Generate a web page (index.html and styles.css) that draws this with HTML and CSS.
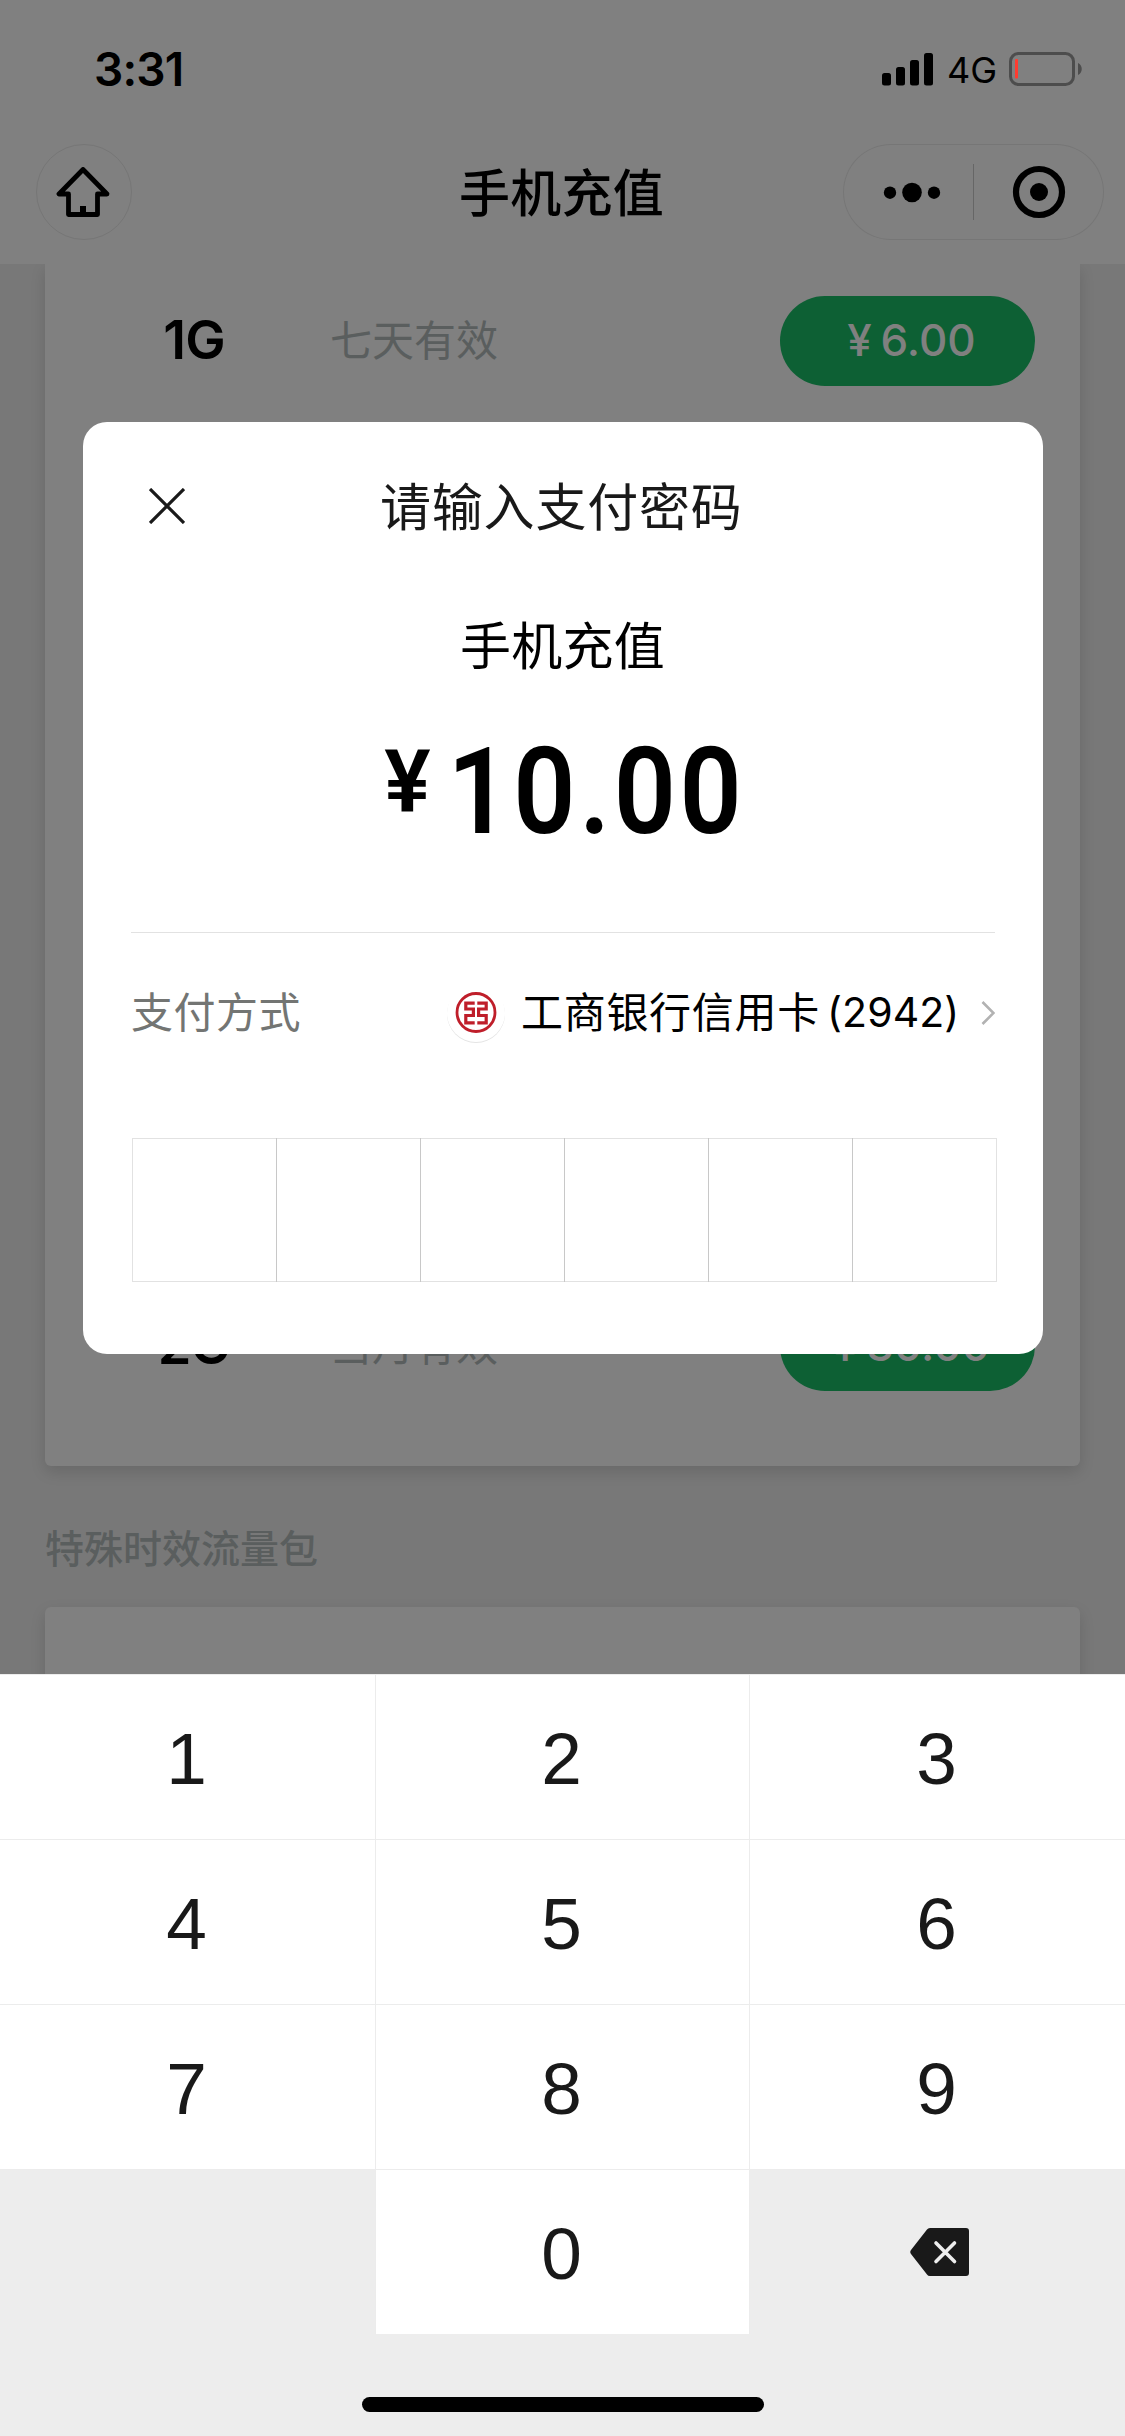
FILE: index.html
```html
<!DOCTYPE html>
<html lang="zh-CN">
<head>
<meta charset="utf-8">
<title>手机充值</title>
<link rel="stylesheet" href="styles.css">
</head>
<body>
<div class="screen">
  <header class="status">
    <span class="clock">3:31</span>
    <div class="status-right">
      <svg class="signal" width="51" height="33" viewBox="0 0 51 33"><rect x="0" y="20" width="9" height="12.5" rx="2.5"/><rect x="14" y="14" width="9" height="18.5" rx="2.5"/><rect x="28" y="7" width="9" height="25.5" rx="2.5"/><rect x="42" y="0" width="9" height="32.5" rx="2.5"/></svg>
      <span class="network">4G</span>
      <svg class="battery" width="74" height="34" viewBox="0 0 74 34"><rect x="1.5" y="1.5" width="63" height="31" rx="8" fill="none" stroke="#4d4d4d" stroke-width="3"/><rect x="6" y="7" width="3" height="19.5" rx="1" fill="#ff3b30"/><path d="M69 11c5 2 5 10 0 12z" fill="#4d4d4d"/></svg>
    </div>
  </header>
  <nav class="nav">
    <div class="home">
      <svg width="54" height="50" viewBox="0 0 54 50"><path d="M27 2.500 3 27h9.500v20.500h29V27H51z" fill="none" stroke="#000" stroke-width="4.800" stroke-linejoin="round"/><rect x="24" y="39" width="6" height="7"/></svg>
    </div>
    <h1 class="nav-title">手机充值</h1>
    <div class="capsule">
      <svg width="261" height="96" viewBox="0 0 261 96"><circle cx="47" cy="48.700" r="6.200"/><circle cx="69" cy="48.500" r="9.800"/><circle cx="91" cy="48.700" r="6.200"/><rect x="130" y="20" width="1" height="56" fill="#666"/><circle cx="196" cy="48" r="23" fill="none" stroke="#000" stroke-width="6.200"/><circle cx="196" cy="48" r="9"/></svg>
    </div>
  </nav>
  <main class="page">
    <section class="card card-main">
      <div class="plan"><span class="size">1G</span><span class="term">七天有效</span><span class="price">¥ 6.00</span></div>
      <div class="plan"><span class="size">2G</span><span class="term">当月有效</span><span class="price">¥ 30.00</span></div>
    </section>
    <h2 class="section-title">特殊时效流量包</h2>
    <section class="card card-next"></section>
  </main>

  <div class="dialog">
    <div class="dialog-head">
      <svg class="close" width="36" height="36" viewBox="0 0 36 36"><path d="M1 1l34 34M35 1L1 35" stroke="#191919" stroke-width="3.200"/></svg>
      <span class="dialog-title">请输入支付密码</span>
    </div>
    <div class="product">手机充值</div>
    <div class="amount"><span class="yen">¥</span><span class="num">10.00</span></div>
    <div class="method">
      <span class="method-label">支付方式</span>
      <span class="bank-logo">
        <svg width="42" height="42" viewBox="0 0 42 42" fill="none" stroke="#bf1e2a"><circle cx="21" cy="20.500" r="19" stroke-width="2.800"/><path d="M19.700 11.200H10.800v5.800h7.600v6.500H10.800v7.300h8.900M22.300 11.200h8.900v5.800h-7.600v6.500h7.600v7.300h-8.900" stroke-width="3.200"/></svg>
      </span>
      <span class="bank">工商银行信用卡</span><span class="card-no">(2942)</span>
      <svg class="chevron" width="14" height="26" viewBox="0 0 14 26"><path d="M1.500 2l11 11-11 11" fill="none" stroke="#b2b2b2" stroke-width="2.600"/></svg>
    </div>
    <div class="pin"><i></i><i></i><i></i><i></i><i></i><i></i></div>
  </div>

  <div class="keypad">
    <div class="keys">
      <b>1</b><b>2</b><b>3</b>
      <b>4</b><b>5</b><b>6</b>
      <b>7</b><b>8</b><b>9</b>
      <b class="blank"></b><b>0</b>
      <b class="blank erase"><svg width="60" height="48" viewBox="0 0 60 48"><path d="M17 1.500Q18 0 20 0H56q3 0 3 3v42q0 3-3 3H20q-2 0-3-1.500L1 26Q-.5 24 1 22z" fill="#191919"/><path d="M26 15l18.500 18.500M44.500 15L26 33.500" stroke="#ededed" stroke-width="3.600" stroke-linecap="round"/></svg></b>
    </div>
    <div class="indicator"></div>
  </div>
</div>
</body>
</html>
```
FILE: styles.css
```css
* { box-sizing: border-box; margin: 0; padding: 0; }
body { width: 1125px; height: 2436px; font-family: Inter, "Noto Sans CJK SC", sans-serif; }
.screen { position: relative; width: 1125px; height: 2436px; overflow: hidden; background: #787878; color: #000; display: flex; flex-direction: column; }
svg { display: block; flex: none; }
span { white-space: nowrap; }

.status { flex: none; height: 138px; padding: 52px 42px 0 94px; background: #808080; display: flex; justify-content: space-between; }
.clock { font-size: 46px; font-weight: 600; line-height: 34px; letter-spacing: -.8px; }
.status-right { display: flex; }
.signal { margin: 1px 14px 0 0; }
.network { width: 62px; font-size: 36px; line-height: 36px; }

.nav { flex: none; height: 126px; padding: 6px 21px 0 36px; background: #808080; display: flex; justify-content: space-between; align-items: flex-start; }
.home { width: 96px; height: 96px; margin-right: 148px; padding-right: 2px; border: 1px solid #767676; border-radius: 50%; display: flex; align-items: center; justify-content: center; }
.nav-title { font-size: 51px; font-weight: 500; line-height: 99px; letter-spacing: .3px; }
.capsule { width: 261px; height: 96px; border-radius: 48px; box-shadow: inset 0 0 0 1px #767676; }

.page { flex: 1; padding: 0 45px; }
.card { background: #808080; border-radius: 6px; box-shadow: 0 6px 15px rgba(0, 0, 0, .13); }
.card-main { height: 1202px; padding: 32px 45px 75px 75px; border-radius: 0 0 6px 6px; display: flex; flex-direction: column; justify-content: space-between; clip-path: inset(0 -30px -30px); }
.plan { height: 90px; display: grid; grid-template: 90px / 148px 1fr 255px; }
.size { text-align: center; font-size: 54px; font-weight: 580; letter-spacing: -.8px; line-height: 87px; }
.term { padding-left: 62px; font-size: 42px; line-height: 90px; color: #5a5e5e; }
.price { padding-left: 8px; border-radius: 45px; background: #0d6034; color: #808080; text-align: center; font-size: 44px; font-weight: 500; line-height: 88px; word-spacing: -3px; }
.section-title { height: 141px; font-size: 39px; font-weight: 550; line-height: 165px; color: #5a5e5e; }
.card-next { height: 200px; }

/* payment dialog over the dimmed page */
.dialog { position: absolute; left: 83px; top: 422px; width: 960px; height: 932px; padding: 0 48px; border-radius: 24px; background: #fff; }
.dialog-head { height: 168px; padding-left: 18px; display: flex; align-items: center; }
.close { margin-right: 195px; }
.dialog-title { margin-top: -5px; font-size: 51px; letter-spacing: .8px; color: #191919; }
.product { height: 112px; padding-right: 1px; text-align: center; font-size: 51px; line-height: 113px; letter-spacing: .3px; }
.amount { height: 231px; padding-left: 14px; border-bottom: 1px solid #e2e2e2; display: flex; justify-content: center; font-family: Roboto, sans-serif; font-weight: 600; }
.yen { font-size: 87px; line-height: 86px; margin: 36px 0 0; }
.num { font-size: 121px; line-height: 122px; margin: 29px -6px 0 0; letter-spacing: 4px; transform: scaleX(.9); }
.method { height: 205px; padding-bottom: 46px; display: flex; align-items: center; }
.method-label { width: 316px; margin-top: -7px; font-size: 42px; letter-spacing: .5px; color: #737573; }
.bank-logo { width: 58px; height: 58px; margin-right: 16px; border-radius: 50%; box-shadow: 0 1px 0 #e4e4e4; display: flex; align-items: center; justify-content: center; }
.bank { width: 306px; margin-top: -7px; font-size: 42px; letter-spacing: .7px; }
.card-no { width: 154px; margin-top: -2px; font-size: 41px; letter-spacing: .1px; }
.pin { width: 865px; height: 144px; margin-left: 1px; display: grid; grid-template-columns: 143px repeat(5, 144px); border: 1px solid #e2e2e2; }
.pin i + i { border-left: 1px solid #c8c8c8; margin: -1px 0; }

.keypad { position: absolute; left: 0; top: 1674px; width: 1125px; height: 762px; background: #ededed; }
.keys { display: grid; grid-template: repeat(4, 165px) / 375px 374px 376px; }
.keys b { padding: 3px 2px 0 0; border-top: 1px solid #ececec; background: #fff; display: flex; align-items: center; justify-content: center; font: 400 73px/1 "Liberation Sans", sans-serif; color: #191919; }
.keys b:not(:nth-child(3n + 1)) { border-left: 1px solid #ececec; }
.keys .blank { background: #ededed; }
.keys .erase { padding: 0 0 0 4px; }
.indicator { width: 402px; height: 15px; margin: 63px auto 0; border-radius: 8px; background: #000; }
```
